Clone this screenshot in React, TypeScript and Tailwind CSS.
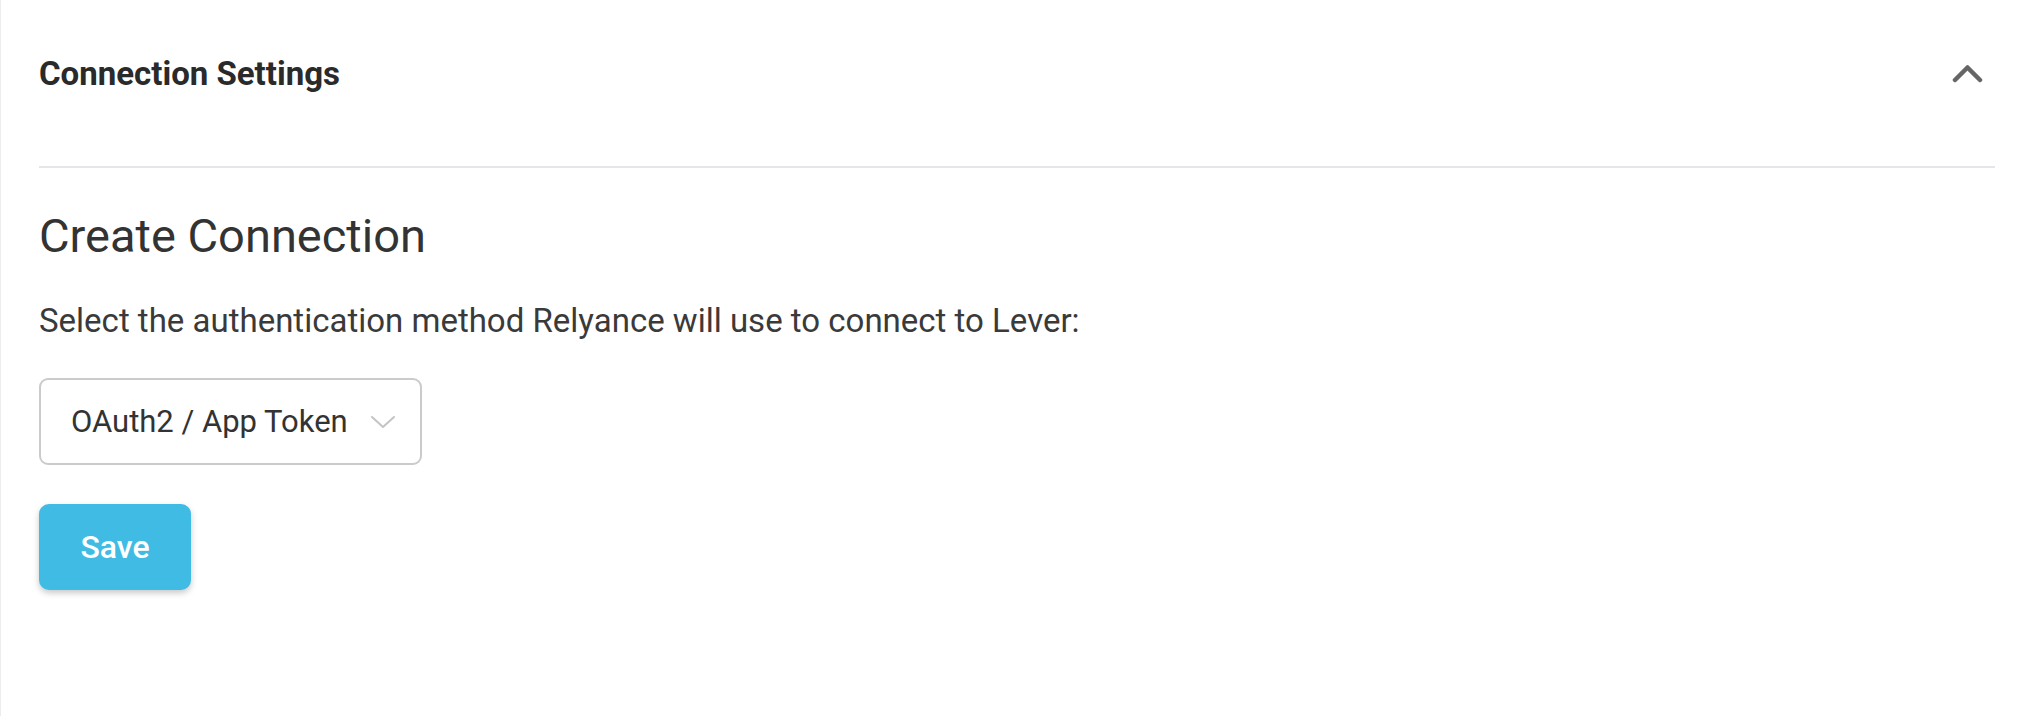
import { useState } from 'react';

function ChevronUp() {
  return (
    <svg width="31" height="21" viewBox="0 0 31 21" fill="none" stroke="#666666" strokeWidth="4.5" strokeLinecap="round" strokeLinejoin="round">
      <polyline points="3 17 15.5 4.5 28 17" />
    </svg>
  );
}

function ChevronDown() {
  return (
    <svg width="26" height="14" viewBox="0 0 26 14" fill="none" stroke="#c4c4c4" strokeWidth="2" strokeLinecap="round" strokeLinejoin="round">
      <polyline points="2 2 13 12 24 2" />
    </svg>
  );
}

export default function App() {
  const [method] = useState('OAuth2 / App Token');

  return (
    <div
      className="min-h-screen w-full bg-white border-l border-[#ececec]"
      style={{ fontFamily: 'Roboto, "Liberation Sans", sans-serif' }}
    >
      <div className="pl-[38px] pr-[35px]">
        {/* Section header */}
        <div className="flex h-[146px] items-center justify-between">
          <span className="text-[33px] font-bold leading-none text-[#2a2a2a]">Connection Settings</span>
          <div className="mr-[12px] flex items-center">
            <ChevronUp />
          </div>
        </div>
        <div className="mt-[20px] h-[2px] bg-[#e4e6ea]" />

        {/* Body */}
        <div className="flex flex-col items-start">
          <h2 className="mt-[44px] text-[47px] font-normal leading-none text-[#333333]">Create Connection</h2>
          <p className="mt-[45px] text-[33px] leading-none text-[#3a3a3a]">
            Select the authentication method Relyance will use to connect to Lever:
          </p>

          <button
            type="button"
            className="mt-[41px] flex h-[87px] w-[383px] items-center rounded-[9px] border-2 border-[#cbcbcb] bg-white pl-[30px]"
          >
            <span className="text-[31px] leading-none text-[#333333]">{method}</span>
            <span className="ml-[22px] flex items-center">
              <ChevronDown />
            </span>
          </button>

          <button
            type="button"
            className="mt-[39px] flex h-[86px] w-[152px] items-center justify-center rounded-[10px] bg-[#40bce4] text-[32px] font-medium leading-none text-white shadow-[0_3px_6px_rgba(0,0,0,0.22)]"
          >
            Save
          </button>
        </div>
      </div>
    </div>
  );
}
